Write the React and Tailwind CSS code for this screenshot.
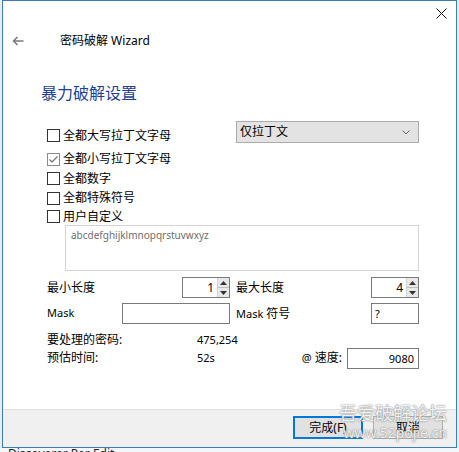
import React from 'react';

function CheckBox({ checked, label }) {
  return (
    <div className="flex items-center">
      {checked ? (
        <span className="w-[13px] h-[13px] border border-[#8c8c8c] bg-white flex items-center justify-center">
          <svg width="11" height="11" viewBox="0 0 11 11">
            <path d="M1.5 5.5 L4 8 L9.5 2.5" fill="none" stroke="#6f6f6f" strokeWidth="1.2" />
          </svg>
        </span>
      ) : (
        <span className="w-[13px] h-[13px] border border-[#333333] bg-white" />
      )}
      <span className="ml-[3px] text-[12px] leading-none text-black">{label}</span>
    </div>
  );
}

function Spinner({ value }) {
  return (
    <div className="w-[48px] h-[21px] border border-[#7a7a7a] bg-white flex">
      <div className="flex-1 text-right pr-[3px] text-[12px] leading-[19px]">{value}</div>
      <div className="w-[12px] flex flex-col bg-[#e8e8e8] border-l border-[#d2d2d2]">
        <div className="flex-1 flex items-center justify-center border-b border-[#bdbdbd]">
          <svg width="7" height="4" viewBox="0 0 7 4">
            <path d="M0 4 L3.5 0 L7 4 Z" fill="#333" />
          </svg>
        </div>
        <div className="flex-1 flex items-center justify-center">
          <svg width="7" height="4" viewBox="0 0 7 4">
            <path d="M0 0 L3.5 4 L7 0 Z" fill="#333" />
          </svg>
        </div>
      </div>
    </div>
  );
}

export default function App() {
  return (
    <div className="w-[459px] h-[452px] relative overflow-hidden bg-[#f4f7fa] font-['Noto_Sans','Noto_Sans_CJK_SC',sans-serif] text-black">
      <div className="flex">
        <div className="w-[2px] h-[448px] bg-[#e9edf0]" />
        {/* Wizard window */}
        <div className="w-[455px] h-[448px] border border-[#3d7db3] bg-white flex flex-col">
          <div className="flex-1 flex flex-col">
            {/* close */}
            <div className="h-[26px] flex justify-end pt-[7px] pr-[9px]">
              <svg width="11" height="11" viewBox="0 0 11 11">
                <path d="M0.5 0.5 L10.5 10.5 M10.5 0.5 L0.5 10.5" stroke="#111" strokeWidth="1" />
              </svg>
            </div>
            {/* title */}
            <div className="mt-[4px] h-[20px] flex items-center pl-[9px]">
              <svg width="12" height="10" viewBox="0 0 12 10">
                <path d="M11.5 5 H1.5 M5.5 1 L1.5 5 L5.5 9" fill="none" stroke="#7b7b7b" strokeWidth="1.6" />
              </svg>
              <span className="ml-[36px] text-[12px] leading-none">密码破解 Wizard</span>
            </div>
            {/* heading */}
            <div className="mt-[31px] h-[22px] pl-[38px] text-[16px] leading-[22px] text-[#1f3f95]">暴力破解设置</div>

            <div className="pl-[44px]">
              <div className="mt-[17px] h-[22px] flex items-end">
                <div className="w-[189px] mb-[1px]">
                  <CheckBox label="全都大写拉丁文字母" />
                </div>
                <div className="w-[183px] h-[22px] border border-[#acacac] bg-[#e3e3e3] flex items-center justify-between pl-[3px] pr-[8px]">
                  <span className="text-[12px] leading-none">仅拉丁文</span>
                  <svg width="8" height="5" viewBox="0 0 8 5">
                    <path d="M0.5 0.5 L4 4 L7.5 0.5" fill="none" stroke="#666" strokeWidth="1" />
                  </svg>
                </div>
              </div>
              <div className="mt-[6px] h-[20px] flex items-center">
                <CheckBox checked label="全都小写拉丁文字母" />
              </div>
              <div className="h-[19px] flex items-center">
                <CheckBox label="全都数字" />
              </div>
              <div className="h-[20px] flex items-center">
                <CheckBox label="全都特殊符号" />
              </div>
              <div className="h-[17px] flex items-center">
                <CheckBox label="用户自定义" />
              </div>

              <div className="ml-[18px] w-[354px] h-[46px] border border-[#d3d3d3] pl-[5px] pt-[2px] text-[10px] leading-[14px] text-[#6e6e6e]">
                abcdefghijklmnopqrstuvwxyz
              </div>

              <div className="mt-[6px] grid grid-cols-[189px_189px] h-[21px]">
                <div className="flex items-center">
                  <span className="w-[135px] text-[12px]">最小长度</span>
                  <Spinner value="1" />
                </div>
                <div className="flex items-center">
                  <span className="w-[135px] text-[12px]">最大长度</span>
                  <Spinner value="4" />
                </div>
              </div>

              <div className="mt-[5px] grid grid-cols-[189px_189px] h-[21px]">
                <div className="flex items-center">
                  <span className="w-[75px] text-[11px]">Mask</span>
                  <div className="w-[108px] h-[21px] border border-[#7a7a7a] bg-white" />
                </div>
                <div className="flex items-center">
                  <span className="w-[135px] text-[11px]">
                    Mask <span className="text-[12px]">符号</span>
                  </span>
                  <div className="w-[48px] h-[21px] border border-[#7a7a7a] bg-white pl-[3px] text-[11px] leading-[19px]">?</div>
                </div>
              </div>

              <div className="mt-[8px] w-[372px]">
                <div className="h-[16px] flex items-center">
                  <span className="w-[150px] text-[12px]">要处理的密码:</span>
                  <span className="text-[11px]">475,254</span>
                </div>
                <div className="h-[20px] flex items-center">
                  <span className="w-[150px] text-[12px]">预估时间:</span>
                  <span className="flex-1 text-[11px]">52s</span>
                  <span className="mr-[5px] text-[12px]">
                    <span className="text-[11px]">@</span> 速度:
                  </span>
                  <div className="w-[72px] h-[21px] border border-[#7a7a7a] bg-white text-right pr-[4px] text-[11px] leading-[19px]">9080</div>
                </div>
              </div>
            </div>
          </div>

          {/* footer */}
          <div className="h-[38px] border-t border-[#dfdfdf] bg-[#f0f0f0] flex justify-end items-start pt-[6px] pr-[13px] gap-[10px]">
            <button className="w-[70px] h-[23px] border-2 border-[#0078d7] bg-[#e1e1e1] text-[12px] leading-none">完成(F)</button>
            <button className="w-[70px] h-[23px] border border-[#adadad] bg-[#e1e1e1] text-[12px] leading-none">取消</button>
          </div>
        </div>
        <div className="w-[2px] h-[448px] bg-[#e6eef6]" />
      </div>
      {/* desktop behind the window */}
      <div className="h-[4px] overflow-hidden pl-[8px]">
        <div className="text-[12px] leading-[12px] text-[#222]">Discoverer Per Edit</div>
      </div>

      {/* watermark */}
      <div className="absolute left-[339px] top-[402px] flex flex-col items-end pointer-events-none text-white/90 [text-shadow:0_0_1px_#777,0_0_2px_#999]">
        <span className="text-[18px] leading-[22px]">吾爱破解论坛</span>
        <span className="text-[14px] leading-[17px]">www.52pojie.cn</span>
      </div>
    </div>
  );
}
